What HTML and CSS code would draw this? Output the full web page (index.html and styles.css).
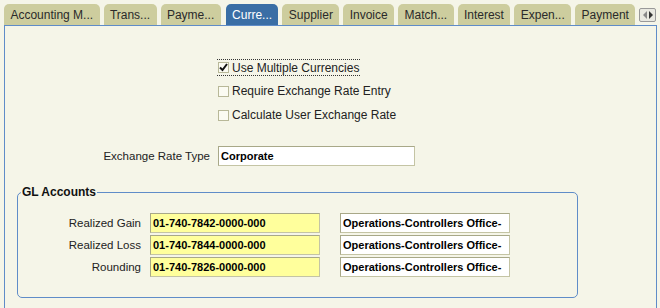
FILE: index.html
```html
<!DOCTYPE html>
<html>
<head>
<meta charset="utf-8">
<link rel="stylesheet" href="styles.css">
</head>
<body>
<div class="tabs">
  <div class="tab">Accounting M...</div>
  <div class="tab">Trans...</div>
  <div class="tab">Payme...</div>
  <div class="tab active">Curre...</div>
  <div class="tab">Supplier</div>
  <div class="tab">Invoice</div>
  <div class="tab">Match...</div>
  <div class="tab">Interest</div>
  <div class="tab">Expen...</div>
  <div class="tab">Payment</div>
  <div class="scroll">
    <svg width="12" height="8" viewBox="0 0 12 8"><path d="M5 0 L1 4 L5 8 Z" fill="#888"/><path d="M7 0 L11 4 L7 8 Z" fill="#333"/></svg>
  </div>
</div>
<div class="panel">
  <div class="checks">
    <div class="check focus"><span class="box"><svg width="9" height="9" viewBox="0 0 9 9"><path d="M1 4.5 L3.5 7 L8 1" stroke="#111" stroke-width="2" fill="none"/></svg></span>Use Multiple Currencies</div>
    <div class="check"><span class="box"></span>Require Exchange Rate Entry</div>
    <div class="check"><span class="box"></span>Calculate User Exchange Rate</div>
  </div>
  <div class="rate-row">
    <span class="label">Exchange Rate Type</span>
    <span class="input white rate">Corporate</span>
  </div>
  <div class="group">
    <div class="group-title">GL Accounts</div>
    <div class="gl-grid">
      <span class="label">Realized Gain</span>
      <span class="input yellow">01-740-7842-0000-000</span>
      <span class="input white">Operations-Controllers Office-</span>
      <span class="label">Realized Loss</span>
      <span class="input yellow">01-740-7844-0000-000</span>
      <span class="input white">Operations-Controllers Office-</span>
      <span class="label">Rounding</span>
      <span class="input yellow">01-740-7826-0000-000</span>
      <span class="input white">Operations-Controllers Office-</span>
    </div>
  </div>
</div>
</body>
</html>
```
FILE: styles.css
```css
html, body {
  margin: 0;
  padding: 0;
  background: #f5f5e8;
  overflow: hidden;
  font-family: "Liberation Sans", Arial, sans-serif;
  font-size: 12px;
  color: #222;
}
.tabs {
  display: flex;
  align-items: flex-end;
  gap: 4px;
  padding: 4px 0 0 4px;
  height: 21px;
}
.tab {
  height: 21px;
  line-height: 23px;
  padding: 0 6.4px;
  background: #cdcd9e;
  border-radius: 5px 5px 0 0;
  color: #2a2a2a;
  white-space: nowrap;
}
.tab.active {
  background: #3a6ea5;
  color: #fff;
  margin-left: 1px;
}
.scroll {
  align-self: flex-start;
  margin-top: 4px;
  width: 15px;
  height: 12px;
  border: 1px solid #999;
  border-radius: 2px;
  background: #e8e8e0;
  display: flex;
  align-items: center;
  justify-content: center;
}
.panel {
  margin-left: 4px;
  width: 653px;
  height: 300px;
  border: 1px solid #5f8cc8;
  border-bottom: none;
  background: #f5f5e8;
  box-sizing: border-box;
}
.checks {
  padding: 33px 0 0 212px;
  display: flex;
  flex-direction: column;
  align-items: flex-start;
}
.check {
  display: flex;
  align-items: center;
  height: 17px;
  box-sizing: border-box;
  margin-bottom: 6.8px;
  white-space: nowrap;
  padding-left: 1px;
  padding-right: 1px;
  font-size: 12px;
}
.check.focus {
  border-top: 1px dotted #333;
  border-bottom: 1px dotted #333;
}
.box {
  flex-shrink: 0;
  width: 9px;
  height: 9px;
  border: 1px solid #b8b898;
  background: #fbfbf2;
  margin-right: 3px;
  display: flex;
  align-items: center;
  justify-content: center;
}
.box svg {
  display: block;
}
.rate-row {
  display: flex;
  align-items: center;
  margin-top: 15.6px;
}
.label {
  text-align: right;
  white-space: nowrap;
  font-size: 11.5px;
}
.rate-row .label {
  width: 205px;
  margin-right: 8px;
}
.input {
  display: block;
  box-sizing: border-box;
  width: 170px;
  height: 20px;
  line-height: 18px;
  padding: 0 2px;
  font-size: 11px;
  font-weight: bold;
  color: #000;
  white-space: nowrap;
  overflow: hidden;
  border: 1px solid #c4c4a4;
  border-top-color: #a8a888;
  border-left-color: #a8a888;
}
.white { background: #fff; }
.yellow { background: #ffff9c; }
.input.rate { width: 197px; }
.group {
  position: relative;
  margin: 26px 0 0 12px;
  width: 561px;
  height: 106px;
  box-sizing: border-box;
  border: 1px solid #5f8cc8;
  border-radius: 5px;
}
.group-title {
  position: absolute;
  left: 3px;
  top: -8px;
  padding: 0 1px;
  background: #f5f5e8;
  font-weight: bold;
  color: #111;
  line-height: 14px;
}
.gl-grid {
  display: grid;
  grid-template-columns: 123px 170px 181px;
  column-gap: 9px;
  row-gap: 2px;
  margin-top: 20px;
  align-items: center;
}
.gl-grid .input.white {
  margin-left: 11px;
}
```
